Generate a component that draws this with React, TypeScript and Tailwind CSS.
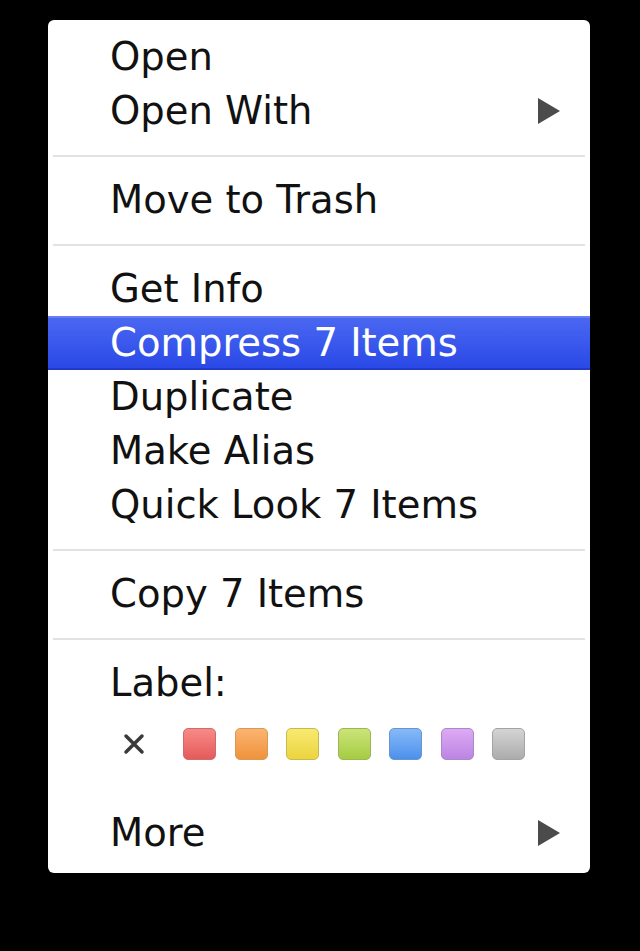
import React from "react";

const Arrow = () => (
  <svg width="24" height="28" viewBox="0 0 24 28" className="mr-[29px]">
    <polygon points="1,1 23,14 1,27" fill="#4b4b4b" />
  </svg>
);

const Item = ({ label, arrow, active }: { label: string; arrow?: boolean; active?: boolean }) => (
  <div
    className={
      active
        ? "h-[54px] flex items-center justify-between pl-[62px] text-white border-t-2 border-t-[#6680f4] border-b-2 border-b-[#2238c8] bg-gradient-to-b from-[#4a67f2] to-[#2a48e6]"
        : "h-[54px] flex items-center justify-between pl-[62px] text-[#111111]"
    }
  >
    <span className="leading-none">{label}</span>
    {arrow ? <Arrow /> : null}
  </div>
);

const Sep = () => (
  <div className="h-[35px] flex items-center px-[5px]">
    <div className="h-[2px] w-full bg-[#e2e2e2]" />
  </div>
);

const swatches = [
  "from-[#f88a88] to-[#e45a5a] border-[#cf6b6b]",
  "from-[#fbb470] to-[#f0923a] border-[#d49a5a]",
  "from-[#f8ea70] to-[#ecd43c] border-[#c9b854]",
  "from-[#cbe478] to-[#a6cc40] border-[#9cb45a]",
  "from-[#86baf8] to-[#4c90ec] border-[#6a94cc]",
  "from-[#deaaf4] to-[#bc84e2] border-[#a98ac4]",
  "from-[#d4d4d4] to-[#acacac] border-[#a4a4a4]",
];

export default function App() {
  return (
    <div className="w-[640px] h-[951px] bg-black pt-[20px] pl-[48px]" style={{ fontFamily: '"DejaVu Sans", sans-serif' }}>
      <div className="w-[542px] h-[853px] bg-white rounded-[6px] pt-[10px] text-[38.5px]">
        <Item label="Open" />
        <Item label="Open With" arrow />
        <Sep />
        <Item label="Move to Trash" />
        <Sep />
        <Item label="Get Info" />
        <Item label="Compress 7 Items" active />
        <Item label="Duplicate" />
        <Item label="Make Alias" />
        <Item label="Quick Look 7 Items" />
        <Sep />
        <Item label="Copy 7 Items" />
        <Sep />
        <Item label="Label:" />
        <div className="h-[96px] flex items-center pl-[75px] pb-[28px]">
          <svg width="22" height="22" viewBox="0 0 22 22" className="mr-[38px]">
            <path d="M3 3 L19 19 M19 3 L3 19" stroke="#3a3a3a" strokeWidth="3.5" strokeLinecap="round" />
          </svg>
          <div className="flex gap-[18.5px]">
            {swatches.map((s, i) => (
              <div key={i} className={"w-[33px] h-[32px] rounded-[5px] border bg-gradient-to-b " + s} />
            ))}
          </div>
        </div>
        <Item label="More" arrow />
      </div>
    </div>
  );
}
